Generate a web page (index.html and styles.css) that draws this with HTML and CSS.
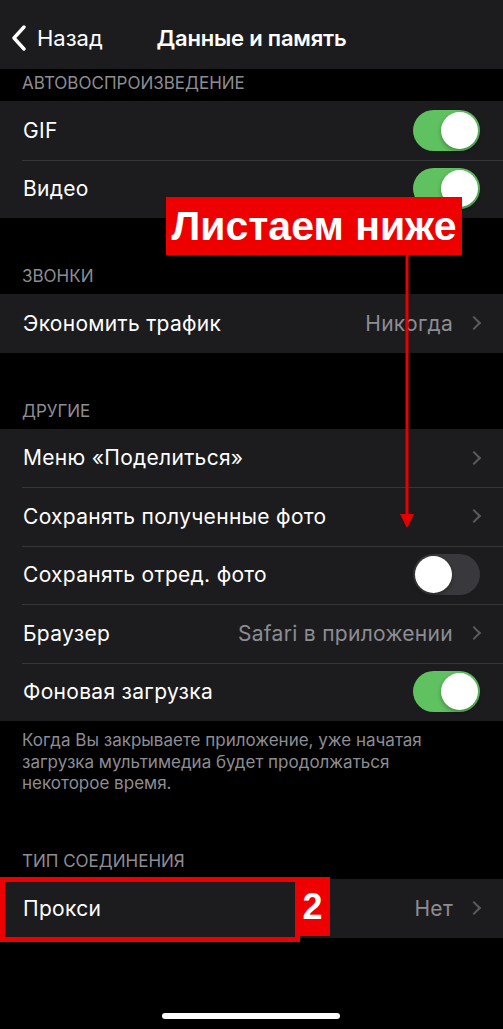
FILE: index.html
```html
<!DOCTYPE html>
<html lang="ru">
<head>
<meta charset="utf-8">
<title>Данные и память</title>
<link rel="stylesheet" href="styles.css">
</head>
<body>
<div class="screen">
  <header class="nav">
    <div class="back">
      <svg class="back-chev" width="18" height="26" viewBox="0 0 18 26"><path d="M14 2 L4 13 L14 24" fill="none" stroke="#fff" stroke-width="3.4" stroke-linecap="round" stroke-linejoin="round"/></svg>
      <span>Назад</span>
    </div>
    <div class="title">Данные и память</div>
    <div></div>
  </header>

  <section class="section first">
    <div class="sec-head">АВТОВОСПРОИЗВЕДЕНИЕ</div>
    <div class="group">
      <div class="row"><span class="label">GIF</span><span class="toggle on"><i></i></span></div>
      <div class="row"><span class="label">Видео</span><span class="toggle on"><i></i></span></div>
    </div>
  </section>

  <section class="section">
    <div class="sec-head">ЗВОНКИ</div>
    <div class="group">
      <div class="row"><span class="label">Экономить трафик</span><span class="value">Никогда</span><span class="chev"></span></div>
    </div>
  </section>

  <section class="section">
    <div class="sec-head">ДРУГИЕ</div>
    <div class="group">
      <div class="row"><span class="label">Меню «Поделиться»</span><span class="chev"></span></div>
      <div class="row"><span class="label">Сохранять полученные фото</span><span class="chev"></span></div>
      <div class="row"><span class="label">Сохранять отред. фото</span><span class="toggle"><i></i></span></div>
      <div class="row"><span class="label">Браузер</span><span class="value">Safari в приложении</span><span class="chev"></span></div>
      <div class="row"><span class="label">Фоновая загрузка</span><span class="toggle on"><i></i></span></div>
    </div>
    <p class="sec-foot">Когда Вы закрываете приложение, уже начатая загрузка мультимедиа будет продолжаться некоторое время.</p>
  </section>

  <section class="section">
    <div class="sec-head">ТИП СОЕДИНЕНИЯ</div>
    <div class="group">
      <div class="row"><span class="label">Прокси</span><span class="value">Нет</span><span class="chev"></span></div>
    </div>
  </section>

  <div class="home-bar"></div>

  <div class="note">Листаем ниже</div>
  <svg class="arrow" width="20" height="275" viewBox="0 0 20 275"><rect x="8.5" y="0" width="3" height="262" fill="#e60000"/><path d="M3 259 L17 259 L10 273 Z" fill="#e60000"/></svg>
  <div class="proxy-frame"></div>
  <div class="step">2</div>
</div>
</body>
</html>
```

FILE: styles.css
```css
* { box-sizing: border-box; }
html, body { margin: 0; padding: 0; background: #000; }
body {
  font-family: Inter, "Noto Sans", "Liberation Sans", sans-serif;
  color: #fff;
  -webkit-font-smoothing: antialiased;
}
.screen {
  position: relative;
  width: 503px;
  height: 1029px;
  overflow: hidden;
  background: #000;
}
.nav {
  height: 69px;
  background: #1c1c1e;
  display: grid;
  grid-template-columns: 1fr auto 1fr;
  align-items: center;
  padding-top: 6px;
}
.back {
  display: flex;
  align-items: center;
  padding-left: 10px;
  font-size: 22px;
}
.back-chev { margin-right: 9px; }
.title {
  font-size: 22px;
  font-weight: 600;
  letter-spacing: -0.2px;
}
.sec-head {
  height: 32px;
  display: flex;
  align-items: flex-end;
  padding: 0 22px 7px;
  font-size: 17px;
  line-height: 22px;
  color: #8d8d93;
}
.section + .section { margin-top: 44px; }
.group { background: #1c1c1e; }
.row {
  position: relative;
  height: 58.5px;
  display: flex;
  align-items: center;
  padding: 0 23px;
  font-size: 21px;
  letter-spacing: 0.3px;
}
.row + .row::before {
  content: "";
  position: absolute;
  left: 22px;
  right: 0;
  top: 0;
  height: 1px;
  background: #353537;
}
.label { flex: 1; }
.value { color: #8d8d93; margin-right: 16px; }
.chev {
  width: 10px;
  height: 10px;
  border-top: 2.6px solid #5c5c60;
  border-right: 2.6px solid #5c5c60;
  transform: rotate(45deg);
  margin-right: 1px;
}
.toggle {
  position: relative;
  width: 67px;
  height: 41px;
  border-radius: 21px;
  background: #39393d;
}
.toggle.on { background: #5fc15f; }
.toggle i {
  position: absolute;
  top: 2px;
  left: 2px;
  width: 37px;
  height: 37px;
  border-radius: 50%;
  background: #fff;
  box-shadow: 0 2px 4px rgba(0,0,0,0.3);
}
.toggle.on i { left: 28px; }
.sec-foot {
  margin: 0;
  padding: 9px 60px 8.5px 22px;
  font-size: 17px;
  line-height: 21.5px;
  color: #8d8d93;
}
.home-bar {
  position: absolute;
  left: 162px;
  top: 1013px;
  width: 178px;
  height: 6px;
  border-radius: 3px;
  background: #fff;
}
.note {
  position: absolute;
  left: 166px;
  top: 197px;
  width: 296px;
  height: 58px;
  background: #ee0000;
  color: #fff;
  font-family: "Liberation Sans", Arial, sans-serif;
  font-weight: 700;
  font-size: 41px;
  line-height: 58px;
  text-align: center;
}
.arrow {
  position: absolute;
  left: 397px;
  top: 255px;
}
.proxy-frame {
  position: absolute;
  left: 0;
  top: 877px;
  width: 300px;
  height: 65px;
  border: 5px solid #ee0000;
}
.step {
  position: absolute;
  left: 295px;
  top: 877px;
  width: 35px;
  height: 59px;
  background: #ee0000;
  color: #fff;
  font-family: "Liberation Sans", Arial, sans-serif;
  font-weight: 700;
  font-size: 36px;
  line-height: 59px;
  text-align: center;
}
```
